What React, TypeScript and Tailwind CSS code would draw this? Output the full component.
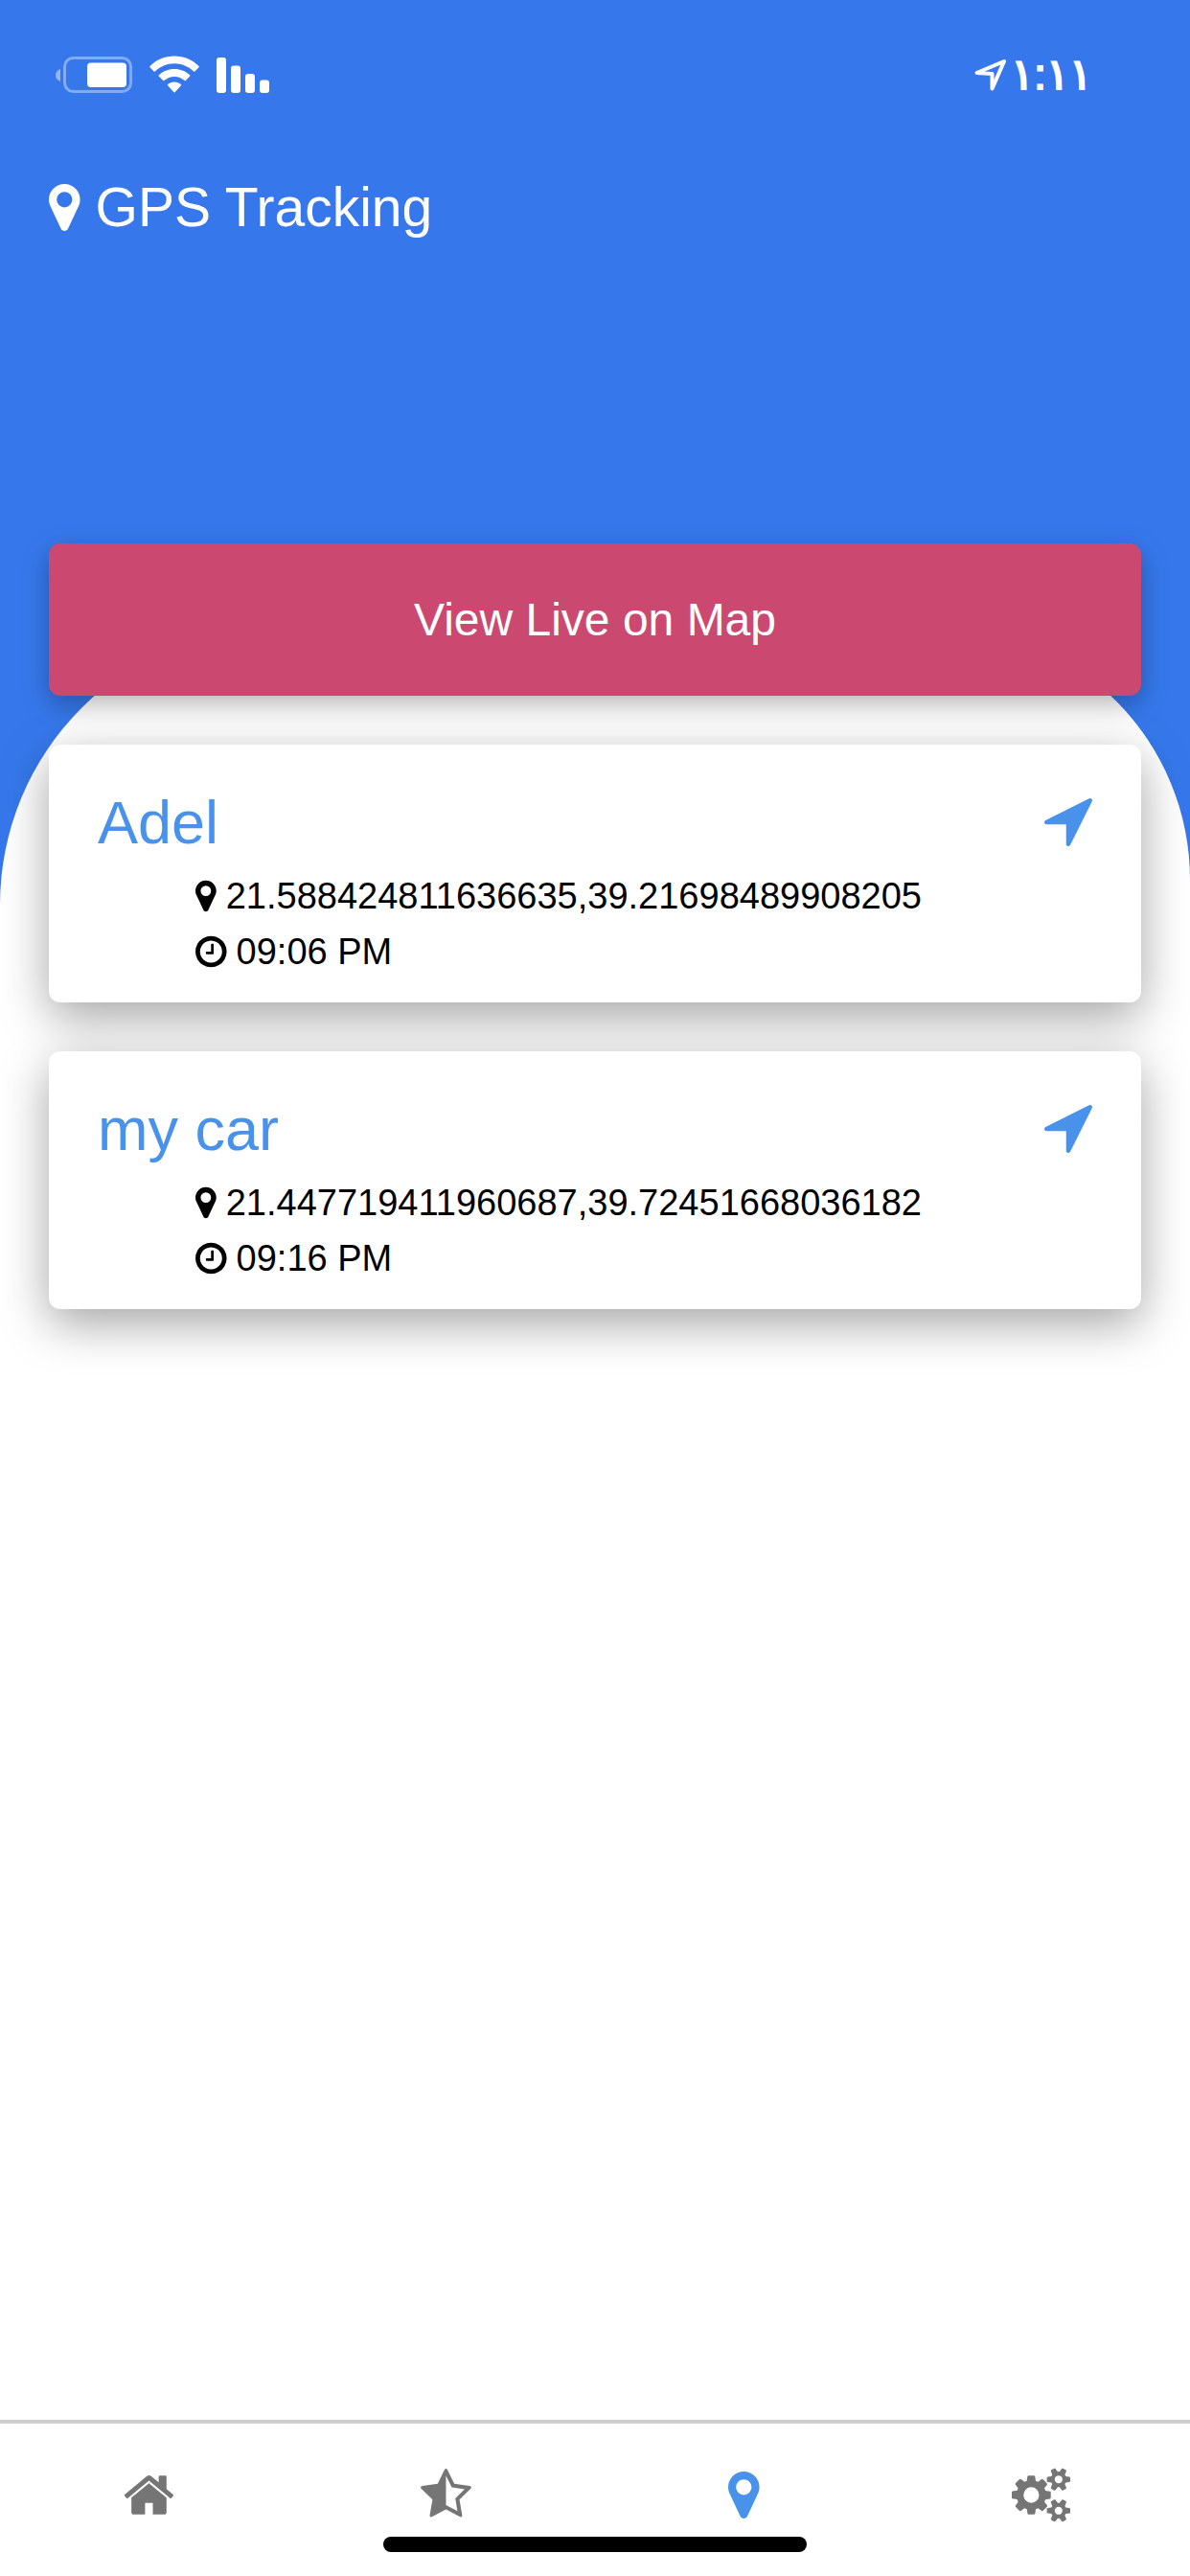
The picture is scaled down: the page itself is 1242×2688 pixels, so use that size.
import type { SVGProps } from 'react'

const ICONS = {
  marker: {
    viewBox: '384 0 1024 1792',
    d: 'M1152 640q0-106-75-181t-181-75-181 75-75 181 75 181 181 75 181-75 75-181zm256 0q0 109-33 179l-364 774q-16 33-47.5 52t-67.5 19-67.5-19-46.5-52l-365-774q-33-70-33-179 0-212 150-362t362-150 362 150 150 362z',
  },
  clock: {
    viewBox: '128 0 1536 1792',
    d: 'M1024 544v448q0 14-9 23t-23 9h-320q-14 0-23-9t-9-23v-64q0-14 9-23t23-9h224v-352q0-14 9-23t23-9h64q14 0 23 9t9 23zm416 352q0-148-73-273t-198-198-273-73-273 73-198 198-73 273 73 273 198 198 273 73 273-73 198-198 73-273zm224 0q0 209-103 385.5t-279.5 279.5-385.5 103-385.5-103-279.5-279.5-103-385.5 103-385.5 279.5-279.5 385.5-103 385.5 103 279.5 279.5 103 385.5z',
  },
  arrow: {
    viewBox: '192 256 1408 1408',
    d: 'M1593 349l-640 1280q-17 35-57 35-5 0-15-2-22-5-35.5-22.5t-13.5-39.5v-576h-576q-22 0-39.5-13.5t-22.5-35.5 4-42 29-30l1280-640q13-7 29-7 27 0 45 19 15 14 18.5 34.5t-6.5 39.5z',
  },
  home: {
    viewBox: '64 0 1664 1792',
    d: 'M1472 992v480q0 26-19 45t-45 19h-384v-384h-256v384h-384q-26 0-45-19t-19-45v-480q0-1 .5-3t.5-3l575-474 575 474q1 2 1 6zm223-69l-62 74q-8 9-21 11h-3q-13 0-21-7l-692-577-692 577q-12 8-24 7-13-2-21-11l-62-74q-8-10-7-23.5t11-21.5l719-599q32-26 76-26t76 26l244 204v-195q0-14 9-23t23-9h192q14 0 23 9t9 23v408l219 182q10 8 11 21.5t-7 23.5z',
  },
  star: {
    viewBox: '64 0 1664 1792',
    d: 'M1250 957l257-250-356-52-66-10-30-60-159-322v963l59 31 318 168-60-355-12-66zm452-262l-363 354 86 500q5 33-6 51.5t-34 18.5q-17 0-40-12l-449-236-449 236q-23 12-40 12-23 0-34-18.5t-6-51.5l86-500-364-354q-32-32-23-59.5t54-34.5l502-73 225-455q20-41 49-41 28 0 49 41l225 455 502 73q45 7 54 34.5t-24 59.5z',
  },
  cogs: {
    viewBox: '-64 0 1920 1792',
    d: 'M832 896q0-106-75-181t-181-75-181 75-75 181 75 181 181 75 181-75 75-181zm768 512q0-52-38-90t-90-38-90 38-38 90q0 53 37.5 90.5t90.5 37.5 90.5-37.5 37.5-90.5zm0-1024q0-52-38-90t-90-38-90 38-38 90q0 53 37.5 90.5t90.5 37.5 90.5-37.5 37.5-90.5zm-384 421v185q0 10-7 19.5t-16 10.5l-155 24q-11 35-32 76 34 48 90 115 7 11 7 20 0 12-7 19-23 30-82.5 89.5t-78.5 59.5q-11 0-21-7l-115-90q-37 19-77 31-11 108-23 155-7 24-30 24h-186q-11 0-20-7.5t-10-17.5l-23-153q-34-10-75-31l-118 89q-7 7-20 7-11 0-21-8-144-133-144-160 0-9 7-19 10-14 41-53t47-61q-23-44-35-82l-152-24q-10-1-17-9.5t-7-19.5v-185q0-10 7-19.5t16-10.5l155-24q11-35 32-76-34-48-90-115-7-11-7-20 0-12 7-20 22-30 82-89t79-59q11 0 21 7l115 90q34-18 77-32 11-108 23-154 7-24 30-24h186q11 0 20 7.5t10 17.5l23 153q34 10 75 31l118-89q8-7 20-7 11 0 21 8 144 133 144 160 0 8-7 19-12 16-42 54t-45 60q23 48 34 82l152 23q10 2 17 10.5t7 19.5zm640 533v140q0 16-149 31-12 27-30 52 51 113 51 138 0 4-4 7-122 71-124 71-8 0-46-47t-52-68q-20 2-30 2t-30-2q-14 21-52 68t-46 47q-2 0-124-71-4-3-4-7 0-25 51-138-18-25-30-52-149-15-149-31v-140q0-16 149-31 13-29 30-52-51-113-51-138 0-4 4-7 4-2 35-20t59-34 30-16q8 0 46 46.5t52 67.5q20-2 30-2t30 2q51-71 92-112l6-2q4 0 124 70 4 3 4 7 0 25-51 138 17 23 30 52 149 15 149 31zm0-1024v140q0 16-149 31-12 27-30 52 51 113 51 138 0 4-4 7-122 71-124 71-8 0-46-47t-52-68q-20 2-30 2t-30-2q-14 21-52 68t-46 47q-2 0-124-71-4-3-4-7 0-25 51-138-18-25-30-52-149-15-149-31v-140q0-16 149-31 13-29 30-52-51-113-51-138 0-4 4-7 4-2 35-20t59-34 30-16q8 0 46 46.5t52 67.5q20-2 30-2t30 2q51-71 92-112l6-2q4 0 124 70 4 3 4 7 0 25-51 138 17 23 30 52 149 15 149 31z',
  },
}

type IconName = keyof typeof ICONS

interface IconProps extends SVGProps<SVGSVGElement> {
  name: IconName
}

function Icon({ name, ...props }: IconProps) {
  return (
    <svg viewBox={ICONS[name].viewBox} fill="currentColor" aria-hidden="true" {...props}>
      <path d={ICONS[name].d} />
    </svg>
  )
}

interface Device {
  name: string
  position: string
  time: string
}

const DEVICES: Device[] = [
  { name: 'Adel', position: '21.588424811636635,39.21698489908205', time: '09:06 PM' },
  { name: 'my car', position: '21.447719411960687,39.72451668036182', time: '09:16 PM' },
]

const TABS: { label: string; icon: IconName; active?: boolean }[] = [
  { label: 'Home', icon: 'home' },
  { label: 'Favorites', icon: 'star' },
  { label: 'Tracking', icon: 'marker', active: true },
  { label: 'Settings', icon: 'cogs' },
]

function StatusBar() {
  return (
    <div className="flex h-[156px] items-center justify-between pl-[58px] pr-[102px]">
      <div className="flex items-center gap-[18px]">
        <svg className="h-10 w-20" viewBox="0 0 80 40" aria-hidden="true">
          <path d="M5 14v13q-5-2-5-6.500t5-6.500z" fill="#fff" fillOpacity="0.45" />
          <rect x="9.500" y="2.500" width="69" height="35" rx="9" fill="none" stroke="#fff" strokeOpacity="0.38" strokeWidth="3" />
          <rect x="33" y="7.500" width="41" height="25.500" rx="4" fill="#fff" />
        </svg>
        <svg className="h-10 w-[52px]" viewBox="0 0 52 40" fill="#fff" aria-hidden="true">
          <path d="M26 .5C36 .5 45 4.500 51.500 11q.6.6 0 1.200L47.400 16.500q-.6.6-1.200 0C40.800 11.500 33.800 8.300 26 8.300S11.200 11.500 5.800 16.500q-.6.600-1.200 0L.5 12.200q-.6-.6 0-1.200C7 4.500 16 .5 26 .5z" />
          <path d="M26 14c6.300 0 12 2.400 16.200 6.400q.6.600 0 1.200l-4.400 4.400q-.6.600-1.200 0C33.800 23.500 30 21.900 26 21.900s-7.800 1.600-10.600 4.100q-.6.600-1.200 0l-4.400-4.400q-.6-.6 0-1.200C14 16.400 19.700 14 26 14z" />
          <path d="M26 27.500c2.600 0 5 .9 6.900 2.500q.7.600 0 1.300l-6.300 6.900q-.6.600-1.200 0l-6.300-6.900q-.7-.7 0-1.300c1.900-1.600 4.300-2.500 6.900-2.500z" />
        </svg>
        <svg className="h-10 w-[55px]" viewBox="0 0 55 40" fill="#fff" aria-hidden="true">
          <rect y="2" width="10" height="37" rx="3" />
          <rect x="15" y="10.500" width="10" height="28.500" rx="3" />
          <rect x="30" y="19" width="10" height="20" rx="3" />
          <rect x="45" y="25.500" width="10" height="13.500" rx="3" />
        </svg>
      </div>
      <div className="flex items-center gap-1">
        <svg className="size-[34px]" viewBox="0 0 34 34" fill="none" aria-hidden="true">
          <path d="M2.500 15 31 3 18.500 31.500V16z" stroke="#fff" strokeWidth="4" strokeLinejoin="round" />
        </svg>
        <time className="font-['Liberation_Sans','DejaVu_Sans',sans-serif] text-[45px] leading-[50px] [-webkit-text-stroke:2px_white]">
          ١:١١
        </time>
      </div>
    </div>
  )
}

function DeviceCard({ device }: { device: Device }) {
  return (
    <li className="rounded-xl bg-white px-[51px] pt-[45px] pb-6 shadow-[0_15px_50px_rgba(0,0,0,0.36)]">
      <div className="flex items-center justify-between text-[#4892ec]">
        <h2 className="text-[63px] leading-[72px]">{device.name}</h2>
        <button type="button" aria-label={`Navigate to ${device.name}`}>
          <Icon name="arrow" className="size-[50px]" />
        </button>
      </div>
      <div className="mt-3 pl-[102px] text-[38px] leading-[58px] text-black">
        <p className="flex items-center gap-[10px]">
          <Icon name="marker" className="h-[38px]" />
          {device.position}
        </p>
        <p className="flex items-center gap-[10px]">
          <Icon name="clock" className="h-[38px]" />
          {device.time}
        </p>
      </div>
    </li>
  )
}

export default function App() {
  return (
    <div className="flex min-h-screen flex-col bg-[#3678ec] font-['Liberation_Sans',Arial,sans-serif] text-white">
      <StatusBar />

      <header className="px-[51px] pt-7">
        <h1 className="flex items-center gap-4 text-[57px] leading-[64px]">
          <Icon name="marker" className="h-[57px]" />
          GPS Tracking
        </h1>
      </header>

      <div className="relative z-10 px-[51px] pt-[319px]">
        <button
          type="button"
          className="w-full rounded-xl bg-[#cb4971] py-[51px] text-[48px] leading-[57px] shadow-[0_9px_28px_rgba(0,0,0,0.29)]"
        >
          View Live on Map
        </button>
      </div>

      {/* curved sheet tucked under the map button */}
      <main className="-mt-[72px] flex-1 rounded-tl-[290px] rounded-tr-[264px] bg-white px-[51px] pt-[123px] pb-[51px]">
        <ul className="flex flex-col gap-[51px]">
          {DEVICES.map((device) => (
            <DeviceCard key={device.name} device={device} />
          ))}
        </ul>
      </main>

      <nav className="border-t-4 border-[#cdcdcd] bg-white pt-[46px] pb-[25px]">
        <div className="grid grid-cols-4">
          {TABS.map((tab) => (
            <a
              key={tab.label}
              href={`#${tab.label.toLowerCase()}`}
              aria-label={tab.label}
              aria-current={tab.active ? 'page' : undefined}
              className={`flex justify-center ${tab.active ? 'text-[#4892ec]' : 'text-[#757575]'}`}
            >
              <Icon name={tab.icon} className="h-[57px]" />
            </a>
          ))}
        </div>
        <div className="mx-auto mt-[15px] h-4 w-[442px] rounded-full bg-black" />
      </nav>
    </div>
  )
}
